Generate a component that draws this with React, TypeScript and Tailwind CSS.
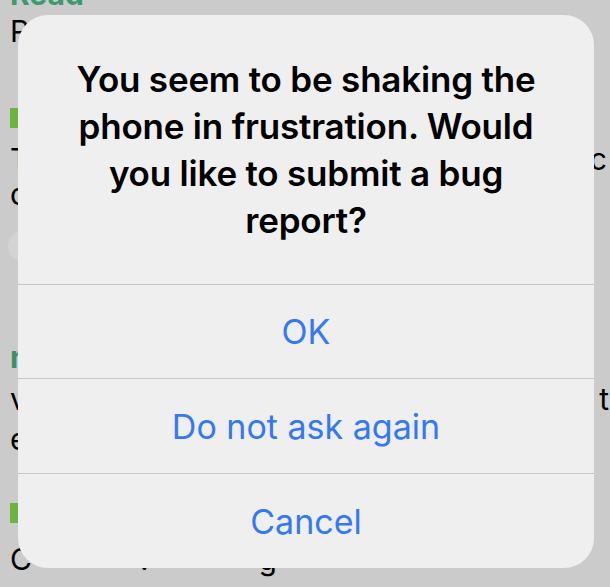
import React from "react";

export default function App() {
  const font = { fontFamily: 'Inter, "Noto Sans", sans-serif' };
  return (
    <div
      className="relative w-[610px] h-[587px] overflow-hidden bg-[#cbcbcb] text-black"
      style={font}
    >
      {/* underlying page */}
      <div className="flex flex-col pl-[10px] text-[30px] leading-[40px]">
        <div className="-mt-[26px] h-[40px] font-bold text-[#3d9a70]">Read</div>
        <div className="-mt-[3px] h-[40px]">Recent</div>
        <div className="mt-[57px] h-[20px] w-[60px] bg-[#6db33f]" />
        <div className="mt-[11px] h-[40px] flex justify-between pr-[3px]">
          <span>T</span>
          <span>ic</span>
        </div>
        <div className="-mt-[5px] h-[40px]">c</div>
        <div className="mt-[16px] h-[32px] w-[220px] -ml-[2px] rounded-full bg-[#d3d3d3]" />
        <div className="mt-[75px] h-[40px] font-bold text-[#3d8f6a]">n</div>
        <div className="mt-[2px] h-[40px] flex justify-between pr-[1px]">
          <span>v</span>
          <span>t</span>
        </div>
        <div className="h-[40px]">e</div>
        <div className="mt-[44px] h-[20px] w-[60px] bg-[#6db33f]" />
        <div className="mt-[16px] h-[40px] flex">
          <span>C</span>
          <span className="ml-[108px]">.</span>
          <span className="ml-[110px]">g</span>
        </div>
      </div>

      {/* alert */}
      <div className="absolute left-[18px] top-[15px] w-[576px] h-[553px] rounded-[30px] bg-[#efefef] overflow-hidden flex flex-col">
        <div className="pt-[41px] pb-[40px] px-[50px] text-center text-[35px] leading-[47px] font-semibold text-black tracking-[-0.2px]">
          You seem to be shaking the phone in frustration. Would you like to submit a bug report?
        </div>
        <div className="h-px bg-[#c6c6c6]" />
        <div className="h-[93px] flex items-center justify-center text-[34px] text-[#3478f6]">OK</div>
        <div className="h-px bg-[#c6c6c6]" />
        <div className="h-[94px] flex items-center justify-center text-[34px] text-[#3478f6]">Do not ask again</div>
        <div className="h-px bg-[#c6c6c6]" />
        <div className="flex-1 flex items-center justify-center text-[34px] text-[#3478f6]">Cancel</div>
      </div>
    </div>
  );
}
